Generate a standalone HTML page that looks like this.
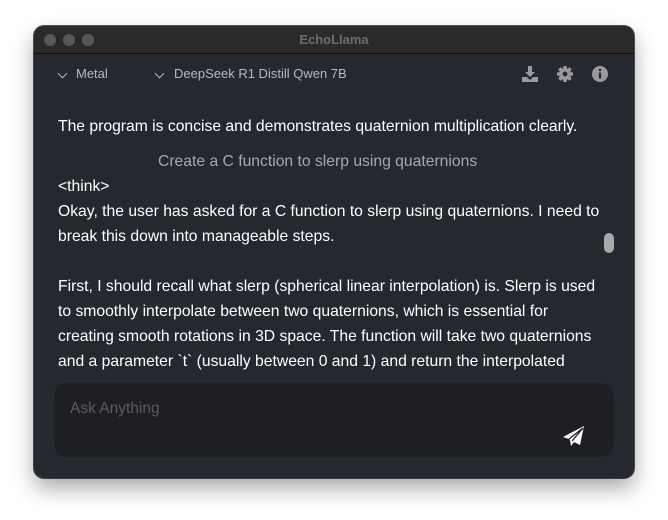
<!DOCTYPE html>
<html><head><meta charset="utf-8"><style>
*{margin:0;padding:0;box-sizing:border-box}
body{width:668px;height:520px;background:#fff;position:relative;overflow:hidden;font-family:"Liberation Sans",sans-serif}
.win{position:absolute;left:34px;top:26px;width:600px;height:452px;background:#262830;border-radius:10px;overflow:hidden;box-shadow:0 10px 22px rgba(0,0,0,0.35),0 0 0 1px #555}
.title{position:absolute;left:0;top:0;width:600px;height:28px;background:#2b2a28;border-bottom:1px solid #111}
.title span{position:absolute;left:0;right:0;top:6px;text-align:center;color:#6e6e6e;font-size:13px;font-weight:bold}
.dot{position:absolute;top:8px;width:12px;height:12px;border-radius:50%;background:#575757}
.t{position:absolute;white-space:nowrap;color:#fff;font-size:15.7px;left:24px}
.tb{position:absolute;color:#b8b8bc;font-size:13px;top:40px;white-space:nowrap}
.chev{position:absolute;top:44px;width:7px;height:7px;border-right:1.5px solid #b8b8bc;border-bottom:1.5px solid #b8b8bc;transform:rotate(45deg)}
.input{position:absolute;left:20px;top:357px;width:560px;height:74px;background:#1e1f23;border-radius:14px}
</style></head><body>
<div class="win">
<div class="title"><div class="dot" style="left:10px"></div><div class="dot" style="left:29px"></div><div class="dot" style="left:48px"></div><span>EchoLlama</span></div>
<div class="chev" style="left:25px"></div><div class="tb" style="left:42px">Metal</div>
<div class="chev" style="left:122px"></div><div class="tb" style="left:140px">DeepSeek R1 Distill Qwen 7B</div>
<svg style="position:absolute;left:487px;top:39px" width="18" height="18" viewBox="0 0 18 18"><path d="M7 1h4v6h3l-5 5-5-5h3z M1 12h5l3 3 3-3h5v5H1z" fill="#9a9a9e"/></svg>
<svg style="position:absolute;left:522px;top:39px" width="18" height="18" viewBox="0 0 18 18"><g fill="#9a9a9e"><circle cx="9" cy="9" r="6"/><rect x="7.3" y="1" width="3.4" height="16"/><rect x="1" y="7.3" width="16" height="3.4"/><rect x="7.3" y="1" width="3.4" height="16" transform="rotate(45 9 9)"/><rect x="7.3" y="1" width="3.4" height="16" transform="rotate(-45 9 9)"/></g><circle cx="9" cy="9" r="2.4" fill="#262830"/></svg>
<svg style="position:absolute;left:557px;top:39px" width="18" height="18" viewBox="0 0 18 18"><circle cx="9" cy="9" r="8" fill="#9a9a9e"/><circle cx="9" cy="5" r="1.3" fill="#262830"/><rect x="7.9" y="7.5" width="2.2" height="6" fill="#262830"/></svg>
<div class="t" style="top:92px">The program is concise and demonstrates quaternion multiplication clearly.</div>
<div class="t" style="top:127px;left:124px;color:#a8a8ac">Create a C function to slerp using quaternions</div>
<div class="t" style="top:152px">&lt;think&gt;</div>
<div class="t" style="top:177px">Okay, the user has asked for a C function to slerp using quaternions. I need to</div>
<div class="t" style="top:202px">break this down into manageable steps.</div>
<div class="t" style="top:252px">First, I should recall what slerp (spherical linear interpolation) is. Slerp is used</div>
<div class="t" style="top:277px">to smoothly interpolate between two quaternions, which is essential for</div>
<div class="t" style="top:302px">creating smooth rotations in 3D space. The function will take two quaternions</div>
<div class="t" style="top:327px">and a parameter `t` (usually between 0 and 1) and return the interpolated</div>
<div style="position:absolute;left:570px;top:207px;width:10px;height:20px;border-radius:5px;background:#a8a8a8"></div>
<div class="input"><div style="position:absolute;left:16px;top:17px;color:#5a5b60;font-size:15.5px">Ask Anything</div>
<svg style="position:absolute;left:508px;top:43px" width="24" height="21" viewBox="0 0 24 21"><path d="M22 0L1 11l6 2 1 1 1 6 3-4 6 3z" fill="#fff"/><path d="M7 13L21 2 10 15" fill="none" stroke="#1e1f23" stroke-width="1.3"/></svg>
</div>
</div>
</body></html>
